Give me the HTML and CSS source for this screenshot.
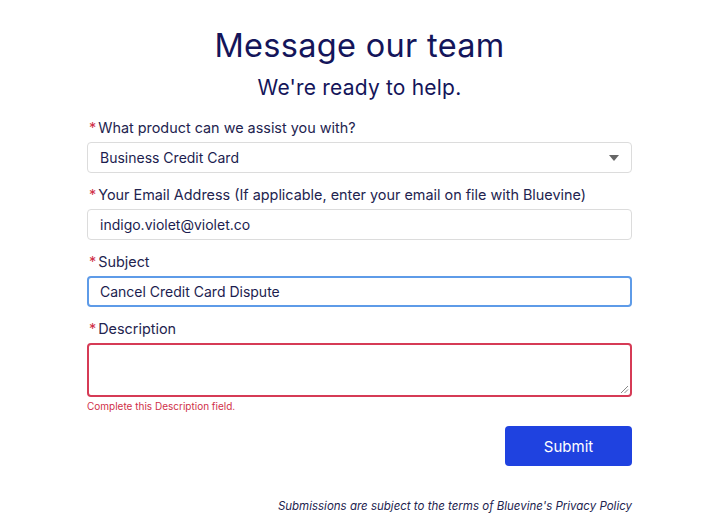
FILE: index.html
```html
<!DOCTYPE html>
<html lang="en">
<head>
<meta charset="utf-8">
<title>Message our team</title>
<link rel="stylesheet" href="styles.css">
</head>
<body>
<main class="page">
  <h1 class="title">Message our team</h1>
  <p class="subtitle">We're ready to help.</p>
  <form class="form">
    <div class="field">
      <label class="label"><span class="req">*</span>What product can we assist you with?</label>
      <div class="select">
        <span class="value">Business Credit Card</span>
        <span class="caret"></span>
      </div>
    </div>
    <div class="field">
      <label class="label"><span class="req">*</span>Your Email Address (If applicable, enter your email on file with Bluevine)</label>
      <div class="input">indigo.violet@violet.co</div>
    </div>
    <div class="field">
      <label class="label"><span class="req">*</span>Subject</label>
      <div class="input focus">Cancel Credit Card Dispute</div>
    </div>
    <div class="field">
      <label class="label"><span class="req">*</span>Description</label>
      <div class="textarea error">
        <svg class="grip" width="9" height="9" viewBox="0 0 9 9"><path d="M8 1L1 8M8 4.5L4.5 8" stroke="#888" stroke-width="1" fill="none"/></svg>
      </div>
      <div class="err-msg">Complete this Description field.</div>
    </div>
    <div class="actions">
      <button type="button" class="submit">Submit</button>
    </div>
    <p class="terms">Submissions are subject to the terms of Bluevine's Privacy Policy</p>
  </form>
</main>
</body>
</html>
```
FILE: styles.css
```css
* { box-sizing: border-box; }
body {
  margin: 0;
  background: #fff;
  font-family: Inter, "Noto Sans", Arial, sans-serif;
  color: #1c1d4f;
}
.page {
  width: 702px;
  padding-top: 26px;
  padding-left: 17px;
  display: flex;
  flex-direction: column;
  align-items: center;
}
.title {
  margin: 0;
  font-size: 32.5px;
  font-weight: 400;
  line-height: 40px;
  color: #14155a;
  letter-spacing: 0.3px;
}
.subtitle {
  margin: 8px 0 0;
  font-size: 21px;
  line-height: 28px;
  color: #14155a;
  letter-spacing: 0.2px;
}
.form {
  width: 545px;
  margin-top: 17px;
  display: flex;
  flex-direction: column;
}
.field {
  display: flex;
  flex-direction: column;
  margin-bottom: 13px;
}
.label {
  font-size: 14.4px;
  line-height: 18px;
  margin-bottom: 5px;
  color: #23244f;
  padding-left: 2px;
}
.req {
  color: #d0304a;
  margin-right: 2px;
}
.select, .input {
  height: 31px;
  border: 1px solid #dcdcdc;
  border-radius: 4px;
  padding: 0 12px;
  font-size: 14px;
  display: flex;
  align-items: center;
  color: #1c1d4f;
}
.select { justify-content: space-between; }
.caret {
  width: 0; height: 0;
  border-left: 5px solid transparent;
  border-right: 5px solid transparent;
  border-top: 6px solid #666;
}
.input.focus {
  border: 2px solid #5e9be8;
  padding-left: 11px;
}
.textarea {
  height: 54px;
  border: 2px solid #d63b56;
  border-radius: 4px;
  position: relative;
}
.grip {
  position: absolute;
  right: 1px;
  bottom: 1px;
}
.err-msg {
  font-size: 10px;
  color: #d0304a;
  margin-top: 3px;
  line-height: 12px;
}
.actions {
  display: flex;
  justify-content: flex-end;
  margin-top: 1px;
}
.submit {
  width: 127px;
  height: 40px;
  border: none;
  border-radius: 4px;
  background: #1f42e0;
  color: #fff;
  font-family: inherit;
  font-size: 15px;
}
.terms {
  margin: 33px 0 0;
  text-align: right;
  font-size: 11.5px;
  font-style: italic;
  color: #23244f;
}
```
